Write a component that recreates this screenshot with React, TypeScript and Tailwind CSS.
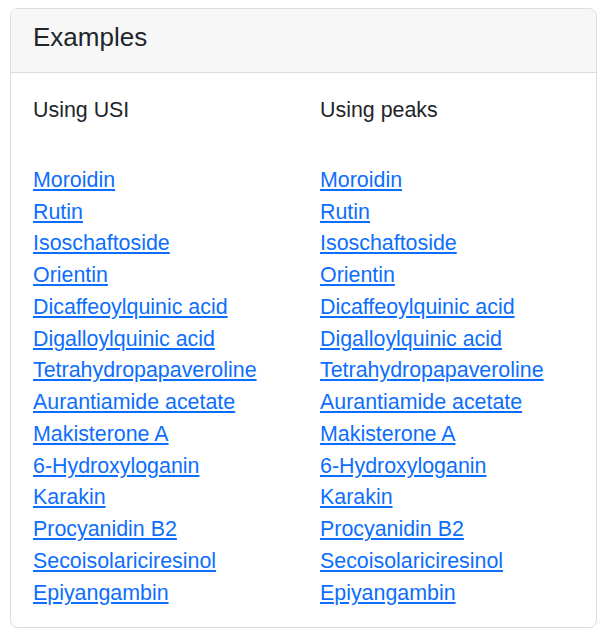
import React from "react";

const compounds = [
  "Moroidin",
  "Rutin",
  "Isoschaftoside",
  "Orientin",
  "Dicaffeoylquinic acid",
  "Digalloylquinic acid",
  "Tetrahydropapaveroline",
  "Aurantiamide acetate",
  "Makisterone A",
  "6-Hydroxyloganin",
  "Karakin",
  "Procyanidin B2",
  "Secoisolariciresinol",
  "Epiyangambin",
];

const ExampleColumn = ({ title }: { title: string }) => {
  return (
    <div className="flex flex-col">
      <h6 className="text-[21.4px] leading-[31.75px] text-[#212529] mb-[38px]">{title}</h6>
      <ul className="flex flex-col">
        {compounds.map((name) => (
          <li key={name} className="text-[21.4px] leading-[31.75px]">
            <a href="#" className="text-[#0d6efd] underline">
              {name}
            </a>
          </li>
        ))}
      </ul>
    </div>
  );
};

export default function App() {
  return (
    <div className="bg-white w-[606px] h-[640px] pl-[10px] pt-[8px] font-['Liberation_Sans',Arial,sans-serif]">
      <div className="w-[587px] h-[620px] border border-[#dcdcdc] rounded-[8px] overflow-hidden flex flex-col">
        <div className="bg-[#f7f7f7] border-b border-[#dcdcdc] h-[64px] px-[22px] pt-[13px]">
          <h5 className="text-[26px] leading-[31px] text-[#212529]">Examples</h5>
        </div>
        <div className="grid grid-cols-[287px_1fr] px-[22px] pt-[22px]">
          <ExampleColumn title="Using USI" />
          <ExampleColumn title="Using peaks" />
        </div>
      </div>
    </div>
  );
}
